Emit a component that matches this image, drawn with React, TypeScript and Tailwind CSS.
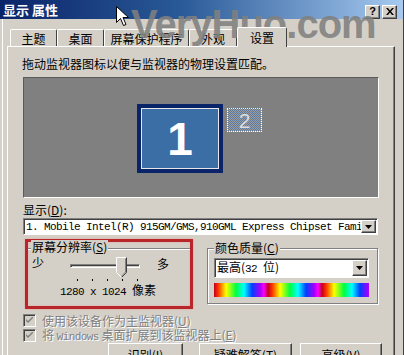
import React from 'react';

const mono = "font-['Liberation_Mono','Noto_Sans_CJK_SC',monospace] text-[11px] tracking-[-0.6px]";
const raised =
  'border border-t-white border-l-white border-r-[#404040] border-b-[#404040] shadow-[inset_-1px_-1px_0_#808080]';
const sunken =
  'border border-t-[#808080] border-l-[#808080] border-r-white border-b-white shadow-[inset_1px_1px_0_#404040]';
const etched = 'border border-[#808080] shadow-[inset_1px_1px_0_#fff,1px_1px_0_#fff]';

const tabs = [
  { label: '主题', w: 'w-[47px]' },
  { label: '桌面', w: 'w-[47px]' },
  { label: '屏幕保护程序', w: 'w-[85px]' },
  { label: '外观', w: 'w-[48px]' },
];

const ArrowButton: React.FC<{ className?: string }> = ({ className = '' }) => (
  <div className={`flex items-center justify-center bg-[#d4d0c8] ${raised} ${className}`}>
    <svg width="7" height="4" viewBox="0 0 7 4">
      <path d="M0 0h7L3.5 4z" fill="#000" />
    </svg>
  </div>
);

const Check: React.FC = () => (
  <div className={`w-[13px] h-[13px] bg-[#d4d0c8] ${sunken} flex items-center justify-center`}>
    <svg width="7" height="7" viewBox="0 0 7 7">
      <path d="M0 2l2 2 5-5v2l-5 5-2-2z" fill="#808080" />
    </svg>
  </div>
);

export default function App() {
  return (
    <div className="relative w-[404px] h-[355px] overflow-hidden bg-[#d4d0c8] font-['Noto_Sans_CJK_SC',sans-serif] text-[12px] leading-[14px] text-black flex flex-col border-r border-r-[#404040]">
      {/* title bar */}
      <div className="h-[19px] shrink-0 flex items-center pl-[3px] pr-[6px] bg-[linear-gradient(90deg,#0a246a,#2a5a98_45%,#a6caf0)]">
        <span className="text-white font-bold text-[13px] leading-none">显示 属性</span>
        <div className="ml-auto flex gap-[2px] mt-[4px]">
          <div className={`w-[15px] h-[14px] bg-[#d4d0c8] ${raised} flex items-center justify-center font-['Liberation_Sans',sans-serif] font-bold text-[11px] leading-none`}>
            ?
          </div>
          <div className={`w-[15px] h-[14px] bg-[#d4d0c8] ${raised} flex items-center justify-center`}>
            <svg width="8" height="7" viewBox="0 0 8 7">
              <path d="M0 0h2l2 2.5L6 0h2L5 3.5 8 7H6L4 4.5 2 7H0l3-3.5z" fill="#000" />
            </svg>
          </div>
        </div>
      </div>

      <div className="flex-1 flex flex-col ml-[2px] border-l border-l-white">
        {/* tab row */}
        <div className="h-[27px] shrink-0 flex items-end pl-[7px]">
          {tabs.map((t) => (
            <div
              key={t.label}
              className={`${t.w} h-[17px] rounded-t-[2px] border-t border-l border-t-white border-l-white border-r border-r-[#404040] flex items-start justify-center pt-[2px]`}
            >
              {t.label}
            </div>
          ))}
          <div className="relative top-[1px] z-10 w-[50px] h-[20px] bg-[#d4d0c8] rounded-t-[2px] border-t border-l border-t-white border-l-white border-r border-r-[#404040] flex items-start justify-center pt-[3px]">
            设置
          </div>
        </div>

        {/* panel */}
        <div className="ml-[4px] w-[388px] flex-1 border-t border-l border-white border-r border-r-[#404040] shadow-[inset_-1px_0_0_#808080] pl-[15px] pt-[10px] flex flex-col">
          <div className="-ml-px">拖动监视器图标以便与监视器的物理设置匹配。</div>

          {/* monitor arrangement */}
          <div className="mt-[6px] w-[356px] h-[121px] shrink-0 bg-[#808080] border border-t-[#5a5a5a] border-l-[#5a5a5a] border-r-white border-b-white flex items-start pl-[113px] pt-[26px] gap-[4px]">
            <div className="w-[86px] h-[69px] bg-[#0a246a] p-[4px]">
              <div className="w-full h-full border border-[#e8e8e8] bg-[#3a6ea5] flex items-center justify-center">
                <span className="font-['Liberation_Sans',sans-serif] font-bold text-[46px] leading-none text-white">1</span>
              </div>
            </div>
            <div className="mt-[4px] w-[35px] h-[24px] border border-dotted border-white bg-[repeating-conic-gradient(#5d7aa0_0_25%,#9c9c9c_0_50%)] bg-[length:2px_2px] flex items-center justify-center">
              <span className="font-['Liberation_Sans',sans-serif] text-[21px] leading-none text-[#dcdcdc]">2</span>
            </div>
          </div>

          <div className="mt-[5px]">
            显示(<span className="underline">D</span>):
          </div>
          <div className={`mt-[1px] w-[355px] h-[17px] shrink-0 bg-white ${sunken} flex items-center pl-[2px] pr-[1px]`}>
            <span className={`${mono} flex-1 overflow-hidden whitespace-nowrap`}>
              1. Mobile Intel(R) 915GM/GMS,910GML Express Chipset Family
            </span>
            <ArrowButton className="w-[15px] h-[13px] shrink-0" />
          </div>

          {/* resolution + colour */}
          <div className="flex items-start mt-[4px]">
            <div className="ml-[2px] w-[168px] h-[70px] border-[3px] border-[#b8262a] shadow-[inset_0_0_2px_#e9a0a0,0_0_2px_#e9a0a0]">
              <div className="mt-[6px] h-[70px] border-t border-t-[#808080] shadow-[inset_0_1px_0_#fff]">
                <div className="-mt-[9px] ml-[3px] px-[1px] w-fit bg-[#d4d0c8]">
                  屏幕分辨率(<span className="underline">S</span>)
                </div>
                <div className="mt-[2px] flex items-start pl-[4px] h-[14px]">
                  <span>少</span>
                  <div className="ml-[26px] pt-[8px]">
                    <div className={`relative w-[70px] h-[4px] ${sunken} bg-[#d4d0c8]`}>
                      <svg className="absolute left-[45px] -top-[8px]" width="11" height="21" viewBox="0 0 11 21">
                        <path d="M0.5 0.5h10v15l-5 5-5-5z" fill="#d4d0c8" />
                        <path d="M0.5 15.5V0.5h10" stroke="#fff" fill="none" />
                        <path d="M10.5 0.5v15l-5 5" stroke="#404040" fill="none" />
                        <path d="M9.5 1.5v13.5l-4.5 4.5" stroke="#808080" fill="none" />
                        <path d="M0.5 15.5l5 5" stroke="#fff" fill="none" />
                      </svg>
                    </div>
                  </div>
                  <span className="ml-[17px] mt-[1px]">多</span>
                </div>
                <div className="mt-[9px] flex gap-[14px] pl-[49px]">
                  {[0, 1, 2, 3, 4].map((i) => (
                    <div key={i} className="w-px h-[2px] bg-black" />
                  ))}
                </div>
                <div className="mt-[2px] pl-[32px] whitespace-nowrap">
                  <span className={mono}>1280 x 1024 </span>像素
                </div>
              </div>
            </div>

            <div className={`ml-[14px] mt-[9px] w-[171px] h-[56px] ${etched}`}>
              <div className="-mt-[8px] ml-[6px] px-[1px] w-fit bg-[#d4d0c8]">
                颜色质量(<span className="underline">C</span>)
              </div>
              <div className={`mt-[3px] ml-[6px] w-[155px] h-[20px] bg-white ${sunken} flex items-center pl-[2px] pr-[1px]`}>
                <span className="flex-1 whitespace-nowrap">
                  最高(<span className={mono}>32 </span>位)
                </span>
                <ArrowButton className="w-[15px] h-[16px] shrink-0" />
              </div>
              <div className="mt-[5px] ml-[6px] w-[155px] h-[14px] bg-[repeating-linear-gradient(90deg,#c00020_0px,#ff3000_4px,#ffff00_12px,#00ff40_22px,#00ffff_30px,#0040ff_38px,#a000ff_46px,#ff00ff_50px,#c00020_54px)]" />
            </div>
          </div>

          {/* checkboxes */}
          <div className="mt-[4px] flex items-center gap-[6px] h-[15px] text-[#808080] [text-shadow:1px_1px_0_#fff]">
            <Check />
            <span>
              使用该设备作为主监视器(<span className="underline">U</span>)
            </span>
          </div>
          <div className="flex items-center gap-[6px] h-[15px] text-[#808080] [text-shadow:1px_1px_0_#fff]">
            <Check />
            <span className="whitespace-nowrap">
              将 <span className={mono}>Windows</span> 桌面扩展到该监视器上(<span className="underline">E</span>)
            </span>
          </div>

          {/* buttons */}
          <div className="flex items-start ml-[85px]">
            <div className={`w-[75px] h-[23px] shrink-0 ${raised} flex items-center justify-center`}>
              识别(<span className="underline">I</span>)
            </div>
            <div className={`ml-[16px] w-[93px] h-[23px] shrink-0 ${raised} flex items-center justify-center`}>
              疑难解答(<span className="underline">T</span>)
            </div>
            <div className={`ml-[8px] w-[82px] h-[23px] shrink-0 ${raised} flex items-center justify-center`}>
              高级(<span className="underline">V</span>)
            </div>
          </div>
        </div>
      </div>

      {/* watermark */}
      <div className="absolute left-[131px] top-[4px] font-['Liberation_Sans',sans-serif] font-bold text-[40px] leading-none tracking-[-1px] text-[rgba(128,128,128,0.9)] pointer-events-none">
        VeryHuo.com
      </div>

      {/* mouse cursor */}
      <svg className="absolute left-[116px] top-[6px]" width="13" height="21" viewBox="0 0 13 21">
        <path d="M0.5 0.5v16l4-4 3 7 2.5-1-3-7h5.5z" fill="#fff" stroke="#000" />
      </svg>
    </div>
  );
}
